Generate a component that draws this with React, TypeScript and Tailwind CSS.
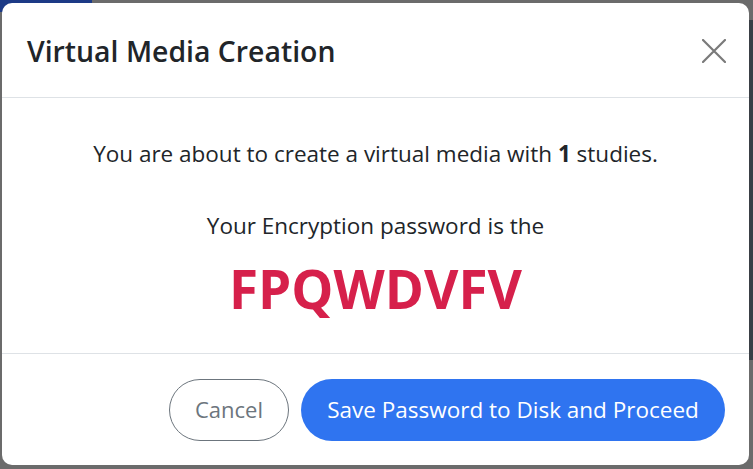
const font = { fontFamily: '"Segoe UI", "Open Sans", "Noto Sans", sans-serif' };

function CloseIcon() {
  return (
    <svg width="24" height="24" viewBox="0 0 24 24" fill="none" stroke="#7a7a7a" strokeWidth="2.2" strokeLinecap="round">
      <path d="M1 1L23 23M23 1L1 23" />
    </svg>
  );
}

export default function App() {
  return (
    <div className="relative h-[469px] w-[753px] overflow-hidden bg-[#6b6b6b]" style={font}>
      {/* bits of the page behind the backdrop */}
      <div className="absolute left-0 top-0 h-[12px] w-[92px] bg-[#1c3a86]" />
      <div className="absolute right-0 top-[20px] h-[340px] w-[4px] bg-[#3a3f45]" />

      <div className="relative ml-[2px] mt-[3px] flex h-[462px] w-[747px] flex-col rounded-[10px] bg-white text-[#212529]">
        <div className="flex h-[95px] items-center justify-between border-b border-[#dee2e6] pl-[25px] pr-[23px] pt-[2px]">
          <h1 className="text-[28.4px] font-semibold leading-[40px]">Virtual Media Creation</h1>
          <button className="flex h-[24px] w-[24px] items-center justify-center">
            <CloseIcon />
          </button>
        </div>

        <div className="flex h-[256px] flex-col items-center border-b border-[#dee2e6] pt-[39px] text-[22.5px] leading-[34px]">
          <p>
            You are about to create a virtual media with <b>1</b> studies.
          </p>
          <p className="mt-[38px]">Your Encryption password is the</p>
          <p className="mt-[10px] text-[53px] font-bold leading-[72px] text-[#d6204b]">FPQWDVFV</p>
        </div>

        <div className="flex flex-1 items-center justify-end gap-[12px] pr-[24px]">
          <button className="h-[62px] w-[120px] rounded-full border border-[#6c757d] text-[22px] text-[#6c757d]">
            Cancel
          </button>
          <button className="h-[62px] w-[424px] rounded-full bg-[#2f74f0] text-[22.5px] text-white">
            Save Password to Disk and Proceed
          </button>
        </div>
      </div>
    </div>
  );
}
